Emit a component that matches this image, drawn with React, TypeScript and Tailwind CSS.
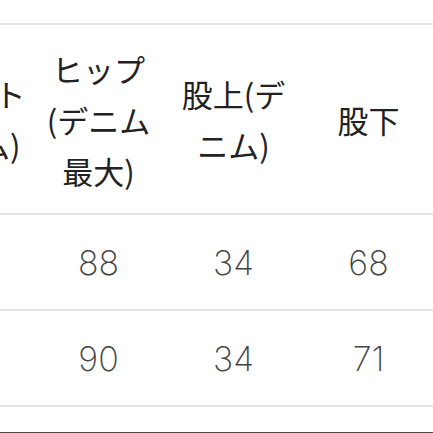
const HEADERS: string[][] = [
  ["ウエスト", "(デニム)"],
  ["ヒップ", "(デニム", "最大)"],
  ["股上(デ", "ニム)"],
  ["股下"],
];

const ROWS: string[][] = [
  ["", "88", "34", "68"],
  ["", "90", "34", "71"],
];

export default function App() {
  return (
    <div className="w-[433px] h-[433px] overflow-hidden bg-white flex flex-col">
      <div className="h-[23px] shrink-0" />
      <div className="border-t-2 border-b-2 border-[#e4e4e4] h-[192px] shrink-0 flex ml-[-104px]">
        {HEADERS.map((lines, i) => (
          <div
            key={i}
            className="w-[135px] shrink-0 flex flex-col items-center justify-center text-[31px] leading-[51px] text-[#222] [font-family:'Noto_Sans_CJK_JP',sans-serif]"
          >
            {lines.map((l, j) => (
              <span key={j} className="whitespace-nowrap">{l}</span>
            ))}
          </div>
        ))}
      </div>
      {ROWS.map((row, i) => (
        <div
          key={i}
          className="border-b-2 border-[#e4e4e4] h-[96px] shrink-0 flex ml-[-104px]"
        >
          {row.map((v, j) => (
            <div
              key={j}
              className="w-[135px] shrink-0 flex items-center justify-center text-[34px] font-extralight text-[#444] [font-family:Inter,sans-serif]"
            >
              {v}
            </div>
          ))}
        </div>
      ))}
      <div className="flex-1" />
      <div className="h-px bg-[#4a4a4a] shrink-0" />
    </div>
  );
}
